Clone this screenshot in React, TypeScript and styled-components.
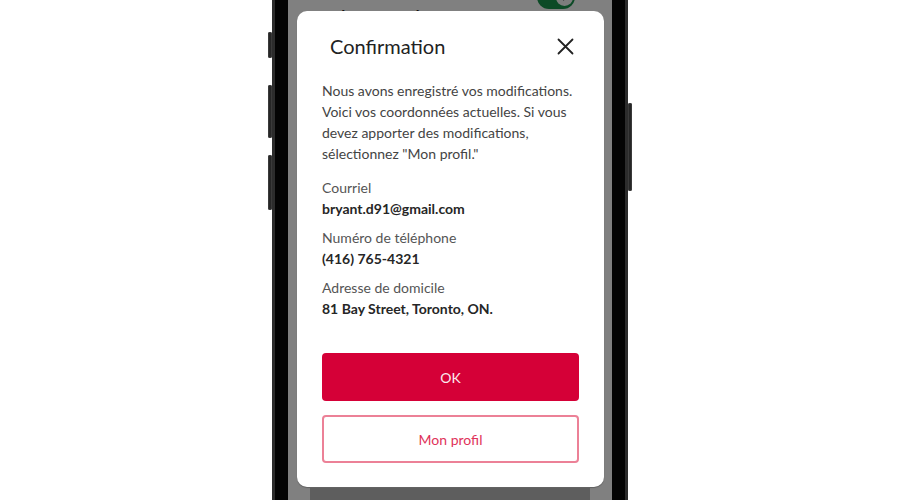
import styled, { createGlobalStyle } from "styled-components";

const GlobalStyle = createGlobalStyle`
  html, body {
    margin: 0;
    padding: 0;
    background: #ffffff;
    font-family: Lato, "Open Sans", sans-serif;
  }
`;

const Stage = styled.div`
  height: 500px;
  overflow: hidden;
  display: flex;
  justify-content: center;
`;

const Phone = styled.div`
  position: relative;
  width: 324px;
  height: 500px;
  display: flex;
  padding: 0 16px;
  background: #040404;
  box-shadow: inset 3px 0 0 #2c2c2c, inset -3px 0 0 #2c2c2c;
`;

const SideKey = styled.div<{ $side: "left" | "right"; $top: number; $h: number }>`
  position: absolute;
  ${(p) => (p.$side === "left" ? "left: -4px;" : "right: -4px;")}
  top: ${(p) => p.$top}px;
  width: 4px;
  height: ${(p) => p.$h}px;
  background: #262626;
  border-radius: 2px;
  box-shadow: inset 0 0 0 1px #3a3a3a;
`;

const Screen = styled.div`
  flex: 1;
  display: flex;
  flex-direction: column;
  background: #808080;
  overflow: hidden;
`;

const TopStrip = styled.div`
  height: 11px;
  box-sizing: border-box;
  flex-shrink: 0;
  display: flex;
  justify-content: space-between;
  align-items: flex-end;
  padding: 0 37px 2px 15px;
  overflow: hidden;
`;

const BehindLabel = styled.div`
  align-self: flex-start;
  margin-top: 7px;
  font-size: 22px;
  line-height: 22px;
  color: #111;
  white-space: nowrap;
`;

const Toggle = styled.div`
  width: 38px;
  height: 24px;
  flex-shrink: 0;
  border-radius: 12px;
  background: #0c4a26;
  display: flex;
  justify-content: flex-end;
  align-items: center;
  padding: 0 2px;
  box-sizing: border-box;
`;

const Knob = styled.div`
  width: 17px;
  height: 17px;
  border-radius: 50%;
  background: #7d7d7d;
  display: flex;
  align-items: center;
  justify-content: center;
`;

const Modal = styled.div`
  height: 476px;
  flex-shrink: 0;
  margin: 0 8px 0 9px;
  box-sizing: border-box;
  background: #ffffff;
  border-radius: 10px;
  box-shadow: 0 1px 1px rgba(0, 0, 0, 0.25);
  padding: 21px 25px 24px;
  display: flex;
  flex-direction: column;
`;

const TitleRow = styled.div`
  display: flex;
  align-items: center;
  justify-content: space-between;
  padding: 0 5px 0 8px;
`;

const Title = styled.h2`
  margin: 0;
  font-size: 20px;
  line-height: 28px;
  font-weight: 400;
  color: #222;
`;

const CloseButton = styled.button`
  border: 0;
  background: none;
  padding: 0;
  width: 18px;
  height: 18px;
  display: flex;
  align-items: center;
  justify-content: center;
  cursor: pointer;
`;

const Message = styled.p`
  margin: 20px 0 0;
  font-size: 14px;
  line-height: 21px;
  color: #444;
`;

const Details = styled.div`
  margin-top: 13px;
  display: flex;
  flex-direction: column;
  gap: 8px;
`;

const Field = styled.div`
  display: flex;
  flex-direction: column;
`;

const Label = styled.span`
  font-size: 14px;
  line-height: 21px;
  color: #555;
`;

const Value = styled.span`
  font-size: 14px;
  line-height: 21px;
  font-weight: 700;
  color: #262626;
`;

const Actions = styled.div`
  margin-top: auto;
  display: flex;
  flex-direction: column;
  gap: 14px;
`;

const Button = styled.button<{ $variant: "primary" | "outline" }>`
  height: 48px;
  border-radius: 4px;
  font-family: Lato, "Open Sans", sans-serif;
  font-size: 14px;
  cursor: pointer;
  box-sizing: border-box;
  background: ${(p) => (p.$variant === "primary" ? "#d50037" : "#ffffff")};
  color: ${(p) => (p.$variant === "primary" ? "#fbeaee" : "#e0335a")};
  border: ${(p) => (p.$variant === "primary" ? "0" : "2px solid #ec8197")};
`;

const BottomStrip = styled.div`
  flex: 1;
  margin: 1px 22px 0;
  background: #5e5e5e;
`;

const fields = [
  { label: "Courriel", value: "bryant.d91@gmail.com" },
  { label: "Numéro de téléphone", value: "(416) 765-4321" },
  { label: "Adresse de domicile", value: "81 Bay Street, Toronto, ON." },
];

export default function App() {
  return (
    <>
      <GlobalStyle />
      <Stage>
        <Phone>
          <SideKey $side="left" $top={32} $h={26} />
          <SideKey $side="left" $top={85} $h={53} />
          <SideKey $side="left" $top={155} $h={55} />
          <SideKey $side="right" $top={103} $h={88} />
          <Screen>
            <TopStrip>
              <BehindLabel>mode sécurisé</BehindLabel>
              <Toggle>
                <Knob>
                  <svg width="11" height="11" viewBox="0 0 24 24" fill="none" stroke="#1b1b1b" strokeWidth="3" strokeLinecap="round" strokeLinejoin="round">
                    <path d="M5 12l5 5 9-10" />
                  </svg>
                </Knob>
              </Toggle>
            </TopStrip>
            <Modal>
              <TitleRow>
                <Title>Confirmation</Title>
                <CloseButton aria-label="Fermer">
                  <svg width="17" height="17" viewBox="0 0 17 17" stroke="#222" strokeWidth="1.8" strokeLinecap="round">
                    <path d="M1.5 1.5l14 14M15.5 1.5l-14 14" />
                  </svg>
                </CloseButton>
              </TitleRow>
              <Message>
                Nous avons enregistré vos modifications. Voici vos coordonnées actuelles. Si vous devez
                apporter des modifications, sélectionnez "Mon profil."
              </Message>
              <Details>
                {fields.map((f) => (
                  <Field key={f.label}>
                    <Label>{f.label}</Label>
                    <Value>{f.value}</Value>
                  </Field>
                ))}
              </Details>
              <Actions>
                <Button $variant="primary">OK</Button>
                <Button $variant="outline">Mon profil</Button>
              </Actions>
            </Modal>
            <BottomStrip />
          </Screen>
        </Phone>
      </Stage>
    </>
  );
}
